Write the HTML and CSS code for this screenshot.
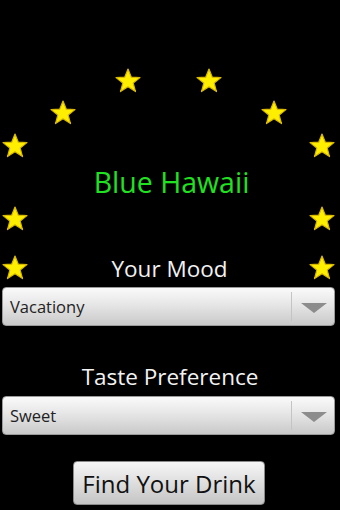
FILE: index.html
```html
<!DOCTYPE html>
<html lang="en">
<head>
    <meta charset="UTF-8">
    <title>Blue Hawaii</title>
    <link rel="stylesheet" href="styles.css">
</head>
<body>

<div class="screen">
    <!-- star arc -->
    <div class="row r1">
        <svg class="star" viewBox="0 0 28 28"><polygon points="14,2 17.3,10.2 26,10.6 19.2,16.1 21.5,24.6 14,19.8 6.5,24.6 8.8,16.1 2,10.6 10.7,10.2"/></svg>
        <svg class="star" viewBox="0 0 28 28"><polygon points="14,2 17.3,10.2 26,10.6 19.2,16.1 21.5,24.6 14,19.8 6.5,24.6 8.8,16.1 2,10.6 10.7,10.2"/></svg>
    </div>
    <div class="row r2">
        <svg class="star" viewBox="0 0 28 28"><polygon points="14,2 17.3,10.2 26,10.6 19.2,16.1 21.5,24.6 14,19.8 6.5,24.6 8.8,16.1 2,10.6 10.7,10.2"/></svg>
        <svg class="star" viewBox="0 0 28 28"><polygon points="14,2 17.3,10.2 26,10.6 19.2,16.1 21.5,24.6 14,19.8 6.5,24.6 8.8,16.1 2,10.6 10.7,10.2"/></svg>
    </div>
    <div class="row r3">
        <svg class="star" viewBox="0 0 28 28"><polygon points="14,2 17.3,10.2 26,10.6 19.2,16.1 21.5,24.6 14,19.8 6.5,24.6 8.8,16.1 2,10.6 10.7,10.2"/></svg>
        <svg class="star" viewBox="0 0 28 28"><polygon points="14,2 17.3,10.2 26,10.6 19.2,16.1 21.5,24.6 14,19.8 6.5,24.6 8.8,16.1 2,10.6 10.7,10.2"/></svg>
    </div>

    <div class="drink-name">Blue Hawaii</div>

    <div class="row r3 r4">
        <svg class="star" viewBox="0 0 28 28"><polygon points="14,2 17.3,10.2 26,10.6 19.2,16.1 21.5,24.6 14,19.8 6.5,24.6 8.8,16.1 2,10.6 10.7,10.2"/></svg>
        <svg class="star" viewBox="0 0 28 28"><polygon points="14,2 17.3,10.2 26,10.6 19.2,16.1 21.5,24.6 14,19.8 6.5,24.6 8.8,16.1 2,10.6 10.7,10.2"/></svg>
    </div>
    <div class="row r3 r5">
        <svg class="star" viewBox="0 0 28 28"><polygon points="14,2 17.3,10.2 26,10.6 19.2,16.1 21.5,24.6 14,19.8 6.5,24.6 8.8,16.1 2,10.6 10.7,10.2"/></svg>
        <span class="label">Your Mood</span>
        <svg class="star" viewBox="0 0 28 28"><polygon points="14,2 17.3,10.2 26,10.6 19.2,16.1 21.5,24.6 14,19.8 6.5,24.6 8.8,16.1 2,10.6 10.7,10.2"/></svg>
    </div>

    <!-- mood spinner -->
    <div class="spinner">
        <span class="spinner-text">Vacationy</span>
        <span class="spinner-arrow"></span>
    </div>

    <div class="label taste">Taste Preference</div>

    <!-- taste spinner -->
    <div class="spinner">
        <span class="spinner-text">Sweet</span>
        <span class="spinner-arrow"></span>
    </div>

    <div class="btn-wrap">
        <button class="btn">Find Your Drink</button>
    </div>
</div>

</body>
</html>
```
FILE: styles.css
```css
body {
    margin: 0;
    background: #000;
    font-family: "Open Sans", "DejaVu Sans", sans-serif;
    color: #fff;
}

.screen {
    width: 340px;
    height: 510px;
    overflow: hidden;
}

.row {
    display: flex;
    justify-content: space-between;
    align-items: center;
    height: 28px;
}

.r1 { margin-top: 67px; padding: 0 117px 0 114px; }
.r2 { margin-top: 4px; padding: 0 52px 0 49px; }
.r3 { margin-top: 5px; padding: 0 4px 0 1px; }
.r4 { margin-top: 0; }
.r5 { margin-top: 21px; }

.star {
    width: 28px;
    height: 28px;
    display: block;
}

.star polygon {
    fill: #ffee00;
    stroke: #d8b800;
    stroke-width: 1.2;
    stroke-linejoin: round;
}

.drink-name {
    height: 45px;
    line-height: 45px;
    text-align: center;
    font-size: 28.5px;
    color: #22e022;
    padding-left: 3px;
}

.label {
    font-size: 22.5px;
    color: #f2f2f2;
    line-height: 28px;
    text-align: center;
}

.r5 .label {
    margin-top: 2px;
    padding-left: 2px;
}

.taste {
    margin-top: 37px;
}

.spinner {
    position: relative;
    margin: 5px 5px 0 2px;
    height: 39px;
    box-sizing: border-box;
    border-radius: 4px;
    border: 1px solid #9a9a9a;
    background: linear-gradient(#fafafa, #e6e6e6 45%, #c9c9c9);
    display: flex;
    align-items: center;
}

.spinner-text {
    padding-left: 7px;
    font-size: 16.5px;
    color: #222;
}

/* divider + triangle on the right */
.spinner-arrow {
    position: absolute;
    right: 0;
    top: 4px;
    bottom: 4px;
    width: 42px;
    border-left: 1px solid #c4c4c4;
}

.spinner-arrow::after {
    content: "";
    position: absolute;
    left: 9px;
    top: 11px;
    border-left: 13px solid transparent;
    border-right: 13px solid transparent;
    border-top: 10px solid #8c8c8c;
}

.btn-wrap {
    text-align: center;
    margin-top: 26px;
}

.btn {
    width: 192px;
    height: 44px;
    margin-left: -2px;
    font-family: "Open Sans", "DejaVu Sans", sans-serif;
    font-size: 24px;
    color: #111;
    border: 1px solid #8a8a8a;
    border-radius: 4px;
    background: linear-gradient(#f6f6f6, #dedede 50%, #c4c4c4);
    padding: 0;
}
```
